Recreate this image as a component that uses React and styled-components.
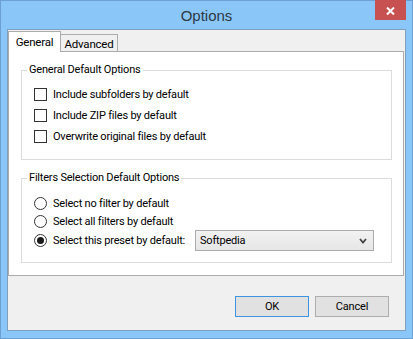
import React from 'react';
import styled, { createGlobalStyle } from 'styled-components';

const Global = createGlobalStyle`
  html, body { margin: 0; padding: 0; background: #fff; }
  body {
    font-family: Roboto, "Liberation Sans", Arial, sans-serif;
    font-size: 11px;
    letter-spacing: -0.2px;
    color: #000;
  }
  * { box-sizing: border-box; }
`;

const Window = styled.div`
  width: 413px;
  height: 339px;
  background: #8bc6f9;
  box-shadow: inset 0 0 0 1px #6d9fd3;
  display: flex;
  flex-direction: column;
  padding: 0 7px 8px 7px;
`;

const TitleBar = styled.div`
  height: 29px;
  flex: none;
  display: grid;
  grid-template-columns: 1fr auto 1fr;
`;

const Title = styled.div`
  grid-column: 2;
  align-self: center;
  font-family: "Liberation Sans", Arial, sans-serif;
  font-size: 15px;
  letter-spacing: 0;
  color: #2c3a48;
  padding-top: 2px;
`;

const CloseButton = styled.div`
  grid-column: 3;
  justify-self: end;
  align-self: start;
  width: 31px;
  height: 20px;
  background: #c75050;
  display: flex;
  align-items: center;
  justify-content: center;
  padding-top: 2px;
`;

const Frame = styled.div`
  flex: 1;
  border: 1px solid #7f9fbf;
  background: #f0f0f0;
  display: flex;
  flex-direction: column;
  padding-top: 1px;
`;

const TabStrip = styled.div`
  height: 20px;
  display: flex;
  align-items: flex-end;
  flex: none;
`;

const Tab = styled.div`
  position: relative;
  z-index: ${p => (p.$active ? 1 : 0)};
  height: ${p => (p.$active ? '21px' : '17px')};
  width: ${p => (p.$active ? '53px' : '58px')};
  margin-bottom: ${p => (p.$active ? '-1px' : '0')};
  margin-left: ${p => (p.$active ? '0' : '-1px')};
  background: ${p => (p.$active ? '#fff' : '#f0f0f0')};
  border: 1px solid #acacac;
  border-bottom: none;
  display: flex;
  align-items: center;
  justify-content: center;
  font-size: 11.5px;
  padding-top: ${p => (p.$active ? '0' : '1px')};
`;

const Panel = styled.div`
  height: 225px;
  flex: none;
  margin-right: 1px;
  background: #fff;
  border: 1px solid #acacac;
  padding: 0 11px 0 12px;
  display: flex;
  flex-direction: column;
`;

const Group = styled.fieldset`
  margin: 11px 0 0;
  padding: 0;
  border: 1px solid #dcdcdc;
  min-width: 0;
`;

const Legend = styled.legend`
  margin-left: 5px;
  padding: 0 2px;
  line-height: 14px;
`;

const Rows = styled.div`
  display: flex;
  flex-direction: column;
  padding: ${p => p.$pad};
  padding-left: 12px;
`;

const Row = styled.label`
  display: flex;
  align-items: center;
  height: ${p => p.$h}px;
  gap: 6px;
  white-space: nowrap;
`;

const Check = styled.span`
  width: 13px;
  height: 13px;
  flex: none;
  border: 1px solid #333;
  background: #fff;
`;

const Radio = styled.span`
  width: 13px;
  height: 13px;
  flex: none;
  border: 1px solid #333;
  border-radius: 50%;
  background: #fff;
  display: flex;
  align-items: center;
  justify-content: center;
  &::after {
    content: '';
    display: ${p => (p.$on ? 'block' : 'none')};
    width: 7px;
    height: 7px;
    border-radius: 50%;
    background: #1a1a1a;
  }
`;

const RowLabel = styled.span`
  width: ${p => (p.$w ? `${p.$w}px` : 'auto')};
  flex: none;
`;

const Select = styled.div`
  width: 179px;
  height: 21px;
  border: 1px solid #acacac;
  background: linear-gradient(#f2f2f2, #e6e6e6);
  display: flex;
  align-items: center;
  justify-content: space-between;
  padding: 0 6px 0 4px;
`;

const Footer = styled.div`
  flex: 1;
  display: flex;
  justify-content: flex-end;
  align-items: flex-start;
  gap: 6px;
  padding: 20px 16px 0 0;
`;

const Button = styled.div`
  width: 74px;
  height: 21px;
  border: 1px solid ${p => (p.$default ? '#3d95df' : '#adadad')};
  background: #e1e1e1;
  display: flex;
  align-items: center;
  justify-content: center;
`;

export default function App() {
  return (
    <>
      <Global />
      <Window>
        <TitleBar>
          <Title>Options</Title>
          <CloseButton>
            <svg width="9" height="8" viewBox="0 0 9 8">
              <path d="M1 0.5 L8 7.5 M8 0.5 L1 7.5" stroke="#fff" strokeWidth="2" />
            </svg>
          </CloseButton>
        </TitleBar>
        <Frame>
          <TabStrip>
            <Tab $active>General</Tab>
            <Tab>Advanced</Tab>
          </TabStrip>
          <Panel>
            <Group>
              <Legend>General Default Options</Legend>
              <Rows $pad="7px 0 12px">
                <Row $h={21}><Check /><RowLabel>Include subfolders by default</RowLabel></Row>
                <Row $h={21}><Check /><RowLabel>Include ZIP files by default</RowLabel></Row>
                <Row $h={21}><Check /><RowLabel>Overwrite original files by default</RowLabel></Row>
              </Rows>
            </Group>
            <Group>
              <Legend>Filters Selection Default Options</Legend>
              <Rows $pad="9px 0 11px">
                <Row $h={18}><Radio /><RowLabel>Select no filter by default</RowLabel></Row>
                <Row $h={18}><Radio /><RowLabel>Select all filters by default</RowLabel></Row>
                <Row $h={21}>
                  <Radio $on />
                  <RowLabel $w={136}>Select this preset by default:</RowLabel>
                  <Select>
                    <span>Softpedia</span>
                    <svg width="8" height="6" viewBox="0 0 8 6">
                      <path d="M1 1 L4 4.5 L7 1" stroke="#444" strokeWidth="1.8" fill="none" />
                    </svg>
                  </Select>
                </Row>
              </Rows>
            </Group>
          </Panel>
          <Footer>
            <Button $default>OK</Button>
            <Button>Cancel</Button>
          </Footer>
        </Frame>
      </Window>
    </>
  );
}
